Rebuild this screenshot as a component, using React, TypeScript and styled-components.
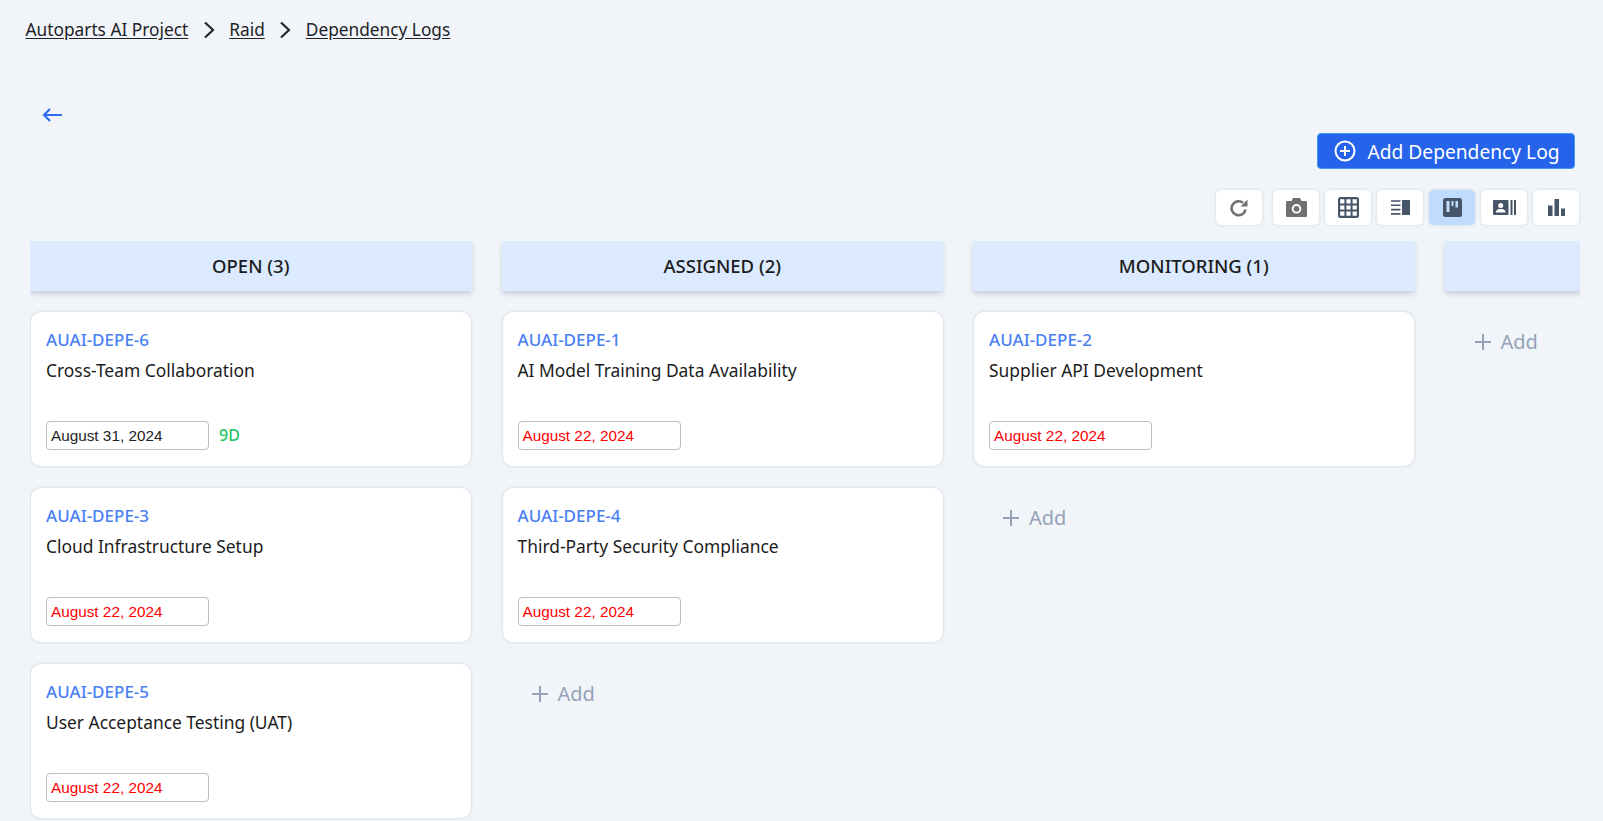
import React from "react";
import styled, { createGlobalStyle } from "styled-components";

const Global = createGlobalStyle`
  html, body { margin: 0; padding: 0; background: #f1f5f9; height: 100%; overflow: hidden; }
  body { font-family: "Noto Sans", "Open Sans", sans-serif; color: #1c1c1c; }
`;
const Page = styled.div`
  height: 821px; overflow: hidden; padding: 18px 23px 0 30px; box-sizing: border-box;
`;
const Crumbs = styled.nav`
  display: flex; align-items: center; gap: 13.5px; height: 24px; margin-left: -4.5px; font-size: 17.3px; line-height: 24px;
`;
const Crumb = styled.a`
  color: #1f2328; text-decoration: underline; text-underline-offset: 2px;
`;
const Back = styled.div`
  margin: 58px 0 0 12px; height: 30px; display: flex; align-items: center; color: #2f6df0;
`;
const AddRow = styled.div`
  display: flex; justify-content: flex-end; margin: 3px 5px 0 0; height: 36px;
`;
const AddButton = styled.button`
  width: 258px; height: 36px; background: #2563eb; border: 1px solid #3b9cf6; border-radius: 4px; color: #fff;
  font: 400 19.2px "Noto Sans", sans-serif; display: flex; align-items: center; justify-content: center; gap: 11px; padding: 0 0 0 2px;
`;
const Toolbar = styled.div`
  display: flex; justify-content: flex-end; gap: 6px; margin-top: 21px; height: 35px; padding-right: 1px;
`;
const Tool = styled.div<{ $active?: boolean; $gap?: boolean }>`
  width: 46px; height: 35px; border-radius: 5px; display: flex; align-items: center; justify-content: center;
  background: ${(p) => (p.$active ? "#bfdbfe" : "#fff")};
  box-shadow: 0 0 3px rgba(100, 116, 139, 0.25);
  margin-right: ${(p) => (p.$gap ? "5px" : "0")};
`;
const Board = styled.div`
  display: flex; gap: 30px; margin-top: 16px; overflow: hidden; height: 600px; width: 1550px;
`;
const Column = styled.section`
  flex: 0 0 441.5px; display: flex; flex-direction: column; gap: 22px;
`;
const ColumnHead = styled.h2`
  flex: none; margin: 0 0 -1px; height: 50px; padding-bottom: 2px; box-sizing: border-box; background: #dbeafe; box-shadow: 0 3px 5px rgba(100, 116, 139, 0.28);
  display: flex; align-items: center; justify-content: center; font-size: 18.5px; font-weight: 500; color: #1c1c1c;
`;
const Card = styled.article`
  flex: none; margin: 0 0.5px 0 1px; height: 154px; box-sizing: border-box; background: #fff; border-radius: 10px; padding: 17px 15px 0;
  box-shadow: 0 0 3px rgba(100, 116, 139, 0.3);
`;
const CardId = styled.div`
  color: #4a7ff5; font-size: 17px; font-weight: 500; line-height: 22px;
`;
const CardTitle = styled.div`
  color: #1c1c1c; font-size: 17.4px; line-height: 24px; margin-top: 7px;
`;
const DateRow = styled.div`
  display: flex; align-items: center; gap: 10px; margin-top: 39px;
`;
const DateBox = styled.div<{ $late?: boolean }>`
  width: 163px; height: 29px; box-sizing: border-box; border: 1px solid #bdbdbd; border-radius: 4px; padding-left: 4px;
  font: 15.3px/27px "Liberation Sans", Arial, sans-serif; color: ${(p) => (p.$late ? "#ff0000" : "#222")};
`;
const Days = styled.span`
  color: #22c55e; font-size: 16px; font-weight: 500; position: relative; top: -1px;
`;
const AddCard = styled.div`
  flex: none; display: flex; align-items: center; gap: 10px; color: #94a3b8; font-size: 20px; margin: 15px 0 0 30px; line-height: 30px;
`;

const Chevron = () => (
  <svg width="14" height="18" viewBox="0 0 14 18" fill="none" stroke="#27272a" strokeWidth="2.2"><path d="M3 1.500l8 7.500-8 7.500" /></svg>
);
const Plus = () => (
  <svg width="16" height="16" viewBox="0 0 16 16" stroke="currentColor" strokeWidth="2"><path d="M8 0v16M0 8h16" /></svg>
);
const dark = "#475569";

const columns = [
  { name: "OPEN (3)", cards: [
    { id: "AUAI-DEPE-6", title: "Cross-Team Collaboration", date: "August 31, 2024", days: "9D" },
    { id: "AUAI-DEPE-3", title: "Cloud Infrastructure Setup", date: "August 22, 2024" },
    { id: "AUAI-DEPE-5", title: "User Acceptance Testing (UAT)", date: "August 22, 2024" },
  ] },
  { name: "ASSIGNED (2)", cards: [
    { id: "AUAI-DEPE-1", title: "AI Model Training Data Availability", date: "August 22, 2024" },
    { id: "AUAI-DEPE-4", title: "Third-Party Security Compliance", date: "August 22, 2024" },
  ] },
  { name: "MONITORING (1)", cards: [
    { id: "AUAI-DEPE-2", title: "Supplier API Development", date: "August 22, 2024" },
  ] },
  { name: "", cards: [] },
] as { name: string; cards: { id: string; title: string; date: string; days?: string }[] }[];

export default function App() {
  return (
    <Page>
      <Global />
      <Crumbs>
        <Crumb>Autoparts AI Project</Crumb><Chevron /><Crumb>Raid</Crumb><Chevron /><Crumb>Dependency Logs</Crumb>
      </Crumbs>
      <Back>
        <svg width="20" height="14" viewBox="0 0 20 14" fill="none" stroke="currentColor" strokeWidth="2.2"><path d="M20 7H2M8 1L2 7l6 6" /></svg>
      </Back>
      <AddRow>
        <AddButton>
          <svg width="22" height="22" viewBox="0 0 22 22" fill="none" stroke="#fff" strokeWidth="2"><circle cx="11" cy="11" r="9.500" /><path d="M11 6v10M6 11h10" /></svg>
          Add Dependency Log
        </AddButton>
      </AddRow>
      <Toolbar>
        <Tool $gap>
          <svg width="18" height="18" viewBox="0 0 18 18" fill="none"><path stroke="#707070" strokeWidth="2.600" d="M15.500 10.500A7 7 0 1 1 13 3.800" /><path fill="#707070" d="M17.500 0.500v7h-7z" /></svg>
        </Tool>
        <Tool>
          <svg width="21" height="19" viewBox="0 0 21 19"><path fill="#707070" fillRule="evenodd" d="M7 0h7l1.500 3H20a1 1 0 0 1 1 1v14a1 1 0 0 1-1 1H1a1 1 0 0 1-1-1V4a1 1 0 0 1 1-1h4.500zM10.500 6a4.800 4.800 0 1 0 0 9.600 4.800 4.800 0 0 0 0-9.600z" /><circle cx="10.500" cy="10.800" r="2.900" fill="#707070" /></svg>
        </Tool>
        <Tool>
          <svg width="21" height="21" viewBox="0 0 21 21"><rect width="21" height="21" rx="2.500" fill={dark} /><path fill="#fff" d="M2.200 2.200h4.200v4.200H2.200zM8.400 2.200h4.200v4.200H8.400zM14.600 2.200h4.200v4.200h-4.200zM2.200 8.400h4.200v4.200H2.200zM8.400 8.400h4.200v4.200H8.400zM14.600 8.400h4.200v4.200h-4.200zM2.200 14.600h4.200v4.200H2.200zM8.400 14.600h4.200v4.200H8.400zM14.600 14.600h4.200v4.200h-4.200z" /></svg>
        </Tool>
        <Tool>
          <svg width="19" height="15" viewBox="0 0 19 15" fill={dark}><rect x="11" y="0" width="8" height="15" /><path stroke={dark} strokeWidth="1.600" d="M0 1h9.500M0 5.300h9.500M0 9.600h9.500M0 13.900h9.500" /></svg>
        </Tool>
        <Tool $active>
          <svg width="19" height="19" viewBox="0 0 19 19"><rect width="19" height="19" rx="2.500" fill={dark} /><path fill="#bfdbfe" d="M3.500 3h3v11h-3zM8.500 3h2v5h-2zM12.500 3h2.500v6.500h-2.500z" /></svg>
        </Tool>
        <Tool>
          <svg width="23" height="15" viewBox="0 0 23 15"><rect width="15.500" height="15" rx="1" fill={dark} /><circle cx="7.700" cy="5.500" r="2.500" fill="#fff" /><path fill="#fff" d="M3 12.500c0-2.800 2-3.500 4.700-3.500s4.700 0.700 4.700 3.500z" /><path fill={dark} d="M17.500 0h2v15h-2zM21 0h2v15h-2z" /></svg>
        </Tool>
        <Tool>
          <svg width="17" height="17" viewBox="0 0 17 17" fill={dark}><path d="M0 6.500h4.500V17H0zM6.500 0H11v17H6.500zM13 9.500h4V17h-4z" /></svg>
        </Tool>
      </Toolbar>
      <Board>
        {columns.map((c, i) => (
          <Column key={i}>
            <ColumnHead>{c.name}</ColumnHead>
            {c.cards.map((k) => (
              <Card key={k.id}>
                <CardId>{k.id}</CardId>
                <CardTitle>{k.title}</CardTitle>
                <DateRow>
                  <DateBox $late={!k.days}>{k.date}</DateBox>
                  {k.days && <Days>{k.days}</Days>}
                </DateRow>
              </Card>
            ))}
            {c.cards.length < 3 && <AddCard><Plus />Add</AddCard>}
          </Column>
        ))}
      </Board>
    </Page>
  );
}
